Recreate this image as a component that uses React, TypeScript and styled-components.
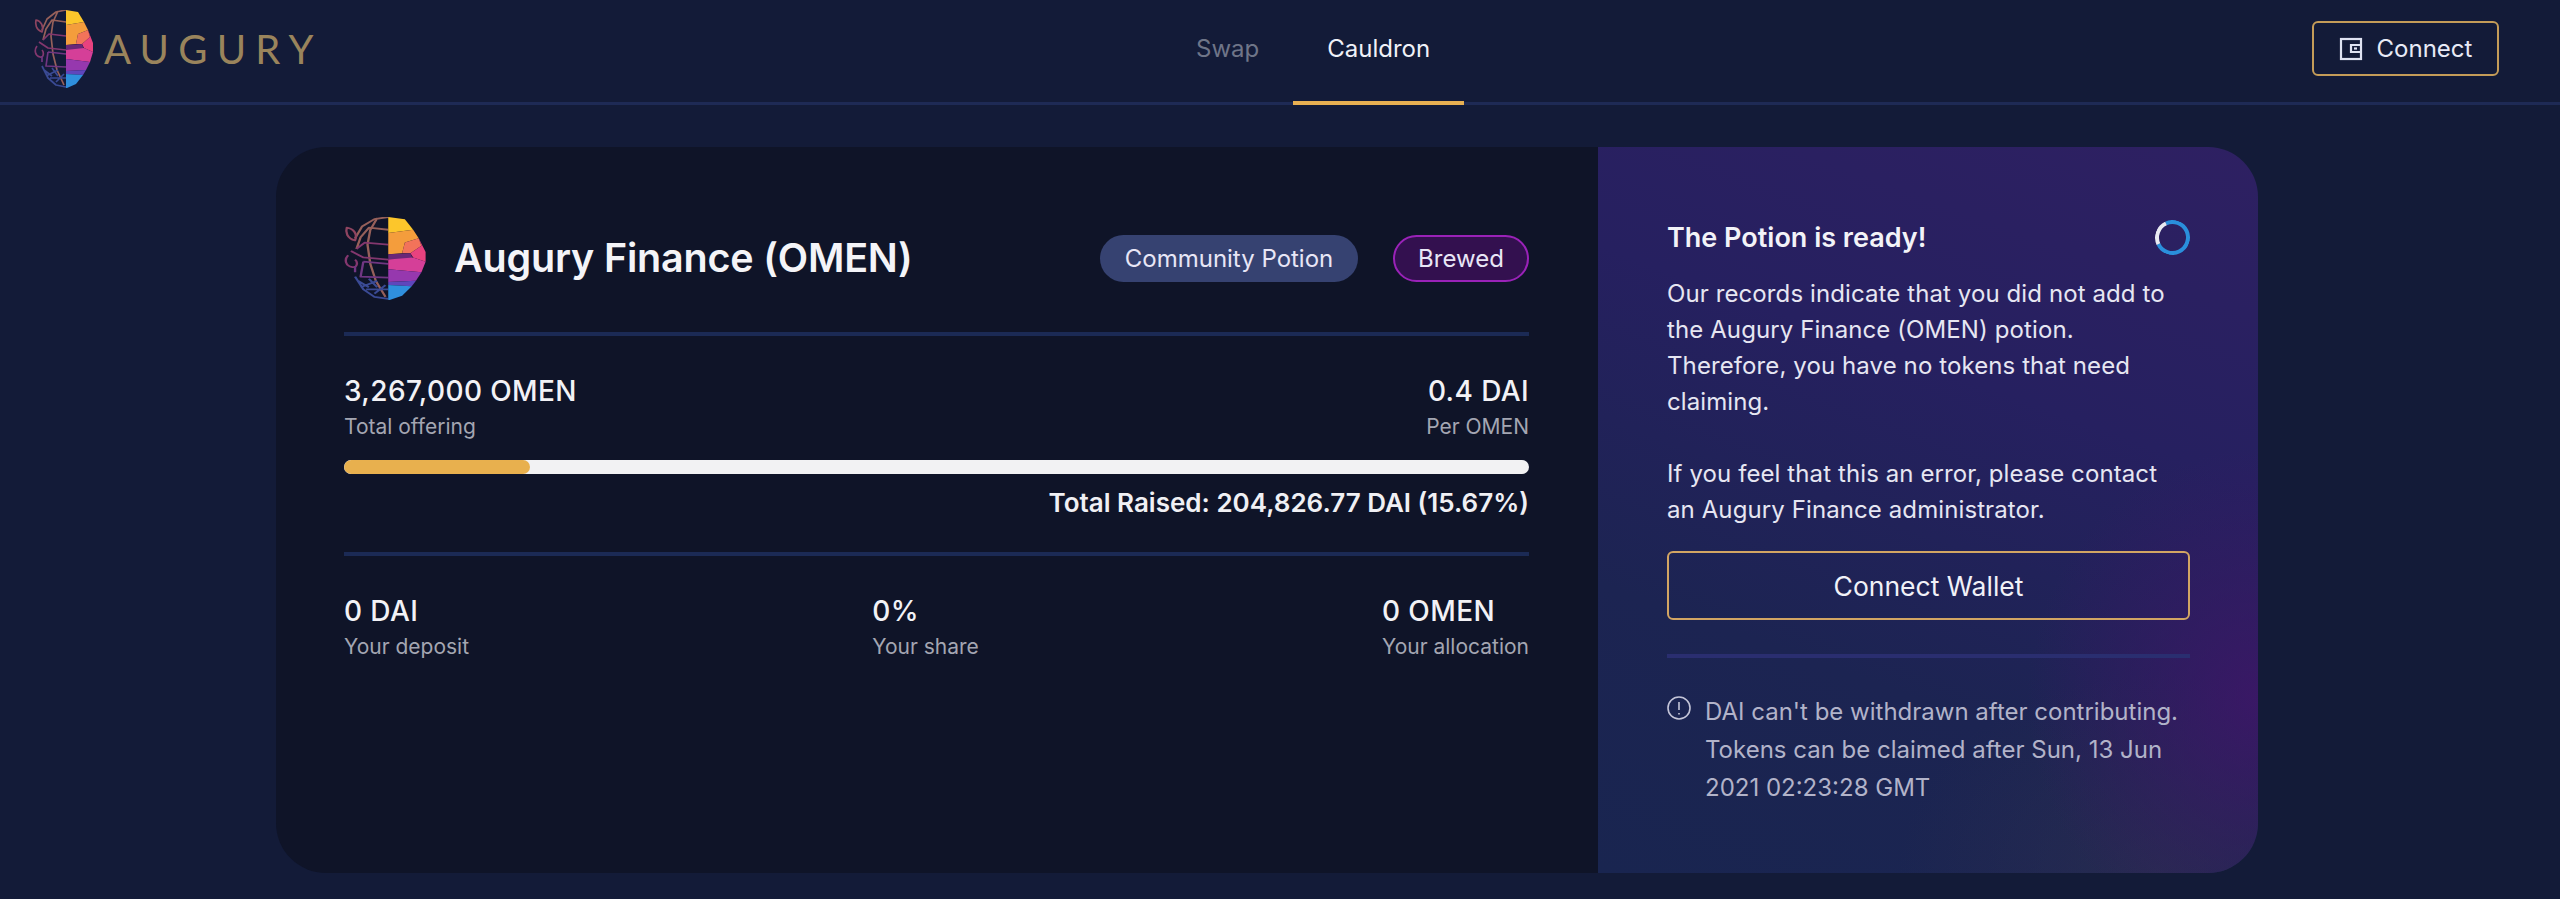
import React from "react";
import styled, { createGlobalStyle } from "styled-components";

const Global = createGlobalStyle`
  html, body { margin: 0; padding: 0; background: #131b38; }
  body { font-family: Inter, "Liberation Sans", sans-serif; color: #f2f2f7; -webkit-font-smoothing: antialiased; }
  * { box-sizing: border-box; }
`;

const Page = styled.div`
  width: 2560px;
  height: 899px;
  overflow: hidden;
  background: #131b38;
`;

const Header = styled.header`
  height: 105px;
  border-bottom: 3px solid #1e2a55;
  display: flex;
  justify-content: space-between;
  align-items: stretch;
  padding: 0 61px 0 34px;
`;

const Brand = styled.div`
  display: flex;
  align-items: flex-start;
  gap: 10px;
  padding-top: 10px;
  width: 1128px;
`;

const Wordmark = styled.span`
  font-family: Lato, sans-serif;
  font-weight: 400;
  font-size: 40px;
  line-height: 78px;
  letter-spacing: 9.2px;
  color: #9a845c;
`;

const Nav = styled.nav`
  display: flex;
  align-items: stretch;
  flex: 1;
`;

const NavItem = styled.a<{ $active?: boolean }>`
  display: flex;
  align-items: center;
  justify-content: center;
  font-size: 24px;
  padding: 0 34px 4px;
  height: 105px;
  color: ${(p) => (p.$active ? "#f0f1f8" : "#6f7588")};
  border-bottom: 4px solid ${(p) => (p.$active ? "#e8b052" : "transparent")};
`;

const Right = styled.div`
  display: flex;
  justify-content: flex-end;
  align-items: flex-start;
  padding-top: 21px;
`;

const ConnectButton = styled.button`
  width: 187px;
  height: 55px;
  display: flex;
  align-items: center;
  justify-content: center;
  gap: 14px;
  background: transparent;
  border: 2px solid #c49c58;
  border-radius: 6px;
  font: 400 24px Inter, sans-serif;
  color: #e8eaf6;
`;

const Main = styled.main`
  display: flex;
  justify-content: flex-start;
  padding: 42px 0 0 276px;
`;

const Card = styled.section`
  width: 1982px;
  height: 726px;
  border-radius: 50px;
  overflow: hidden;
  display: grid;
  grid-template-columns: 1322px 660px;
`;

const LeftPanel = styled.div`
  background: #0f1428;
  padding: 66px 69px 0 68px;
`;

const TitleRow = styled.div`
  display: flex;
  align-items: center;
  height: 90px;
`;

const Title = styled.h1`
  margin: 0 0 0 27px;
  font-size: 39.5px;
  font-weight: 600;
  letter-spacing: -0.2px;
  color: #f4f4f8;
  flex: 1;
`;

const Pill = styled.span<{ $kind: "blue" | "purple" }>`
  height: 47px;
  display: inline-flex;
  align-items: center;
  justify-content: center;
  border-radius: 24px;
  font-size: 24px;
  color: #e8e6f6;
  width: ${(p) => (p.$kind === "blue" ? "258px" : "136px")};
  margin-left: ${(p) => (p.$kind === "blue" ? "0" : "35px")};
  background: ${(p) => (p.$kind === "blue" ? "#364271" : "#33104f")};
  border: ${(p) => (p.$kind === "blue" ? "none" : "2px solid #9a22b8")};
`;

const Divider = styled.div<{ $top: number; $bottom: number }>`
  height: 4px;
  background: #1b2a55;
  margin-top: ${(p) => p.$top}px;
  margin-bottom: ${(p) => p.$bottom}px;
`;

const Spread = styled.div`
  display: flex;
  justify-content: space-between;
`;

const Stat = styled.div<{ $end?: boolean }>`
  display: flex;
  flex-direction: column;
  align-items: ${(p) => (p.$end ? "flex-end" : "flex-start")};
`;

const StatValue = styled.div`
  font-size: 28px;
  font-weight: 500;
  line-height: 34px;
  color: #f2f2f6;
  letter-spacing: 0.4px;
`;

const StatLabel = styled.div`
  font-size: 21px;
  line-height: 26px;
  margin-top: 6px;
  color: #a4a6b2;
`;

const Track = styled.div`
  height: 14px;
  border-radius: 7px;
  background: #f2f2f3;
  overflow: hidden;
  margin-top: 20px;
`;

const Fill = styled.div`
  height: 100%;
  border-radius: 7px;
  background: #e8b04e;
`;

const Raised = styled.div`
  text-align: right;
  font-size: 26px;
  font-weight: 600;
  line-height: 32px;
  margin-top: 13px;
  color: #f0f0f4;
`;

const RightPanel = styled.aside`
  padding: 72px 68px 0 69px;
  background:
    radial-gradient(230px 250px at 100% 76%, rgba(62, 22, 104, 0.85), rgba(62, 22, 104, 0) 100%),
    radial-gradient(260px 200px at 85% 100%, rgba(44, 46, 80, 0.7), rgba(44, 46, 80, 0) 100%),
    linear-gradient(200deg, #2e2062 0%, #262060 35%, #1c2452 70%, #192550 100%);
`;

const PotionHead = styled.div`
  display: flex;
  justify-content: space-between;
  align-items: center;
  height: 36px;
`;

const PotionTitle = styled.h2`
  margin: 0;
  font-size: 27px;
  font-weight: 600;
  color: #f3f3f8;
`;

const Spinner = styled.div`
  width: 35px;
  height: 35px;
  border-radius: 50%;
  border: 4px solid #2a8fdc;
  border-left-color: #e9eaf2;
  transform: rotate(20deg);
`;

const Body = styled.p`
  margin: 21px 0 0;
  font-size: 24px;
  line-height: 36px;
  color: #e6e6f2;
  letter-spacing: 0.1px;
`;

const WalletButton = styled.button`
  display: block;
  width: 100%;
  height: 69px;
  margin-top: 23px;
  background: transparent;
  border: 2px solid #d2a563;
  border-radius: 6px;
  font: 400 26.5px Inter, sans-serif;
  color: #f1f1f8;
`;

const PanelDivider = styled.div`
  height: 4px;
  background: #2a2e70;
  margin: 34px 0 35px;
`;

const Note = styled.div`
  display: flex;
  gap: 14px;
`;

const NoteText = styled.p`
  margin: 0;
  font-size: 24px;
  line-height: 38px;
  color: #b2b3c9;
`;

const NoteIcon = styled.svg`
  flex: none;
  margin-top: 3px;
`;

const FaceSvg = styled.svg`
  flex: none;
  filter: blur(0.5px);
`;

const Face = ({ w, h }: { w: number; h: number }) => (
  <FaceSvg width={w} height={h} viewBox="0 0 60 78" fill="none" preserveAspectRatio="none">
    <g strokeWidth="1.7" strokeLinejoin="round">
      <path d="M32 0 L22 2 L13 9 L8 20 M32 12 L18 10 L12 19 L9 30 M24 1 L19 12 L17 26 L19 44 L23 60 L30 75" stroke="#96605a" />
      <path d="M8 22 C2 20 1 14 2 10 C7 11 10 16 8 22 Z" stroke="#8e4460" />
      <path d="M32 26 L15 24 L9 30 M3 36 C0 40 1 46 6 47 C10 48 10 42 8 40 M5 32 L14 38 L32 40" stroke="#83376e" />
      <path d="M14 42 L32 44 M8 46 L8 52 M14 42 L12 56 L32 57" stroke="#703682" />
      <path d="M8 56 L14 68 L22 75 L32 77 M16 68 L32 68 M10 60 L18 66 M18 58 L24 66 M12 66 L24 60 M22 72 L30 64" stroke="#3a4a94" />
    </g>
    <polygon points="32,0 44,2 50,12 32,15" fill="#fcc62b" />
    <polygon points="32,15 50,12 54,20 44,24 42,34 32,35" fill="#f49d3c" />
    <polygon points="44,24 54,20 56,27 48,34 42,34" fill="#f2735a" />
    <polygon points="54,20 59,33 59,42 50,38 48,34 56,27" fill="#e8427f" />
    <polygon points="32,35 48,34 50,40 32,40" fill="#6a2778" />
    <polygon points="32,40 50,38 59,42 56,52 32,49" fill="#d53f98" />
    <polygon points="32,49 56,52 52,60 32,61" fill="#9638ae" />
    <polygon points="32,61 52,60 49,65 32,64" fill="#5f46bc" />
    <polygon points="32,64 49,65 42,74 33,78 32,78" fill="#2f8fdd" />
  </FaceSvg>
);

const Wallet = () => (
  <svg width="24" height="24" viewBox="0 0 24 24" fill="none" stroke="#dfe3f2" strokeWidth="2.2">
    <rect x="2" y="2" width="20" height="20" />
    <path d="M22 8 H12 V15 H22" />
    <path d="M15 11.5 H18" />
  </svg>
);

export default function App() {
  return (
    <Page>
      <Global />
      <Header>
        <Brand>
          <Face w={60} h={78} />
          <Wordmark>AUGURY</Wordmark>
        </Brand>
        <Nav>
          <NavItem>Swap</NavItem>
          <NavItem $active>Cauldron</NavItem>
        </Nav>
        <Right>
          <ConnectButton>
            <Wallet />
            Connect
          </ConnectButton>
        </Right>
      </Header>
      <Main>
        <Card>
          <LeftPanel>
            <TitleRow>
              <Face w={83} h={83} />
              <Title>Augury Finance (OMEN)</Title>
              <Pill $kind="blue">Community Potion</Pill>
              <Pill $kind="purple">Brewed</Pill>
            </TitleRow>
            <Divider $top={29} $bottom={38} />
            <Spread>
              <Stat>
                <StatValue>3,267,000 OMEN</StatValue>
                <StatLabel>Total offering</StatLabel>
              </Stat>
              <Stat $end>
                <StatValue>0.4 DAI</StatValue>
                <StatLabel>Per OMEN</StatLabel>
              </Stat>
            </Spread>
            <Track>
              <Fill style={{ width: "15.67%" }} />
            </Track>
            <Raised>Total Raised: 204,826.77 DAI (15.67%)</Raised>
            <Divider $top={33} $bottom={38} />
            <Spread>
              <Stat>
                <StatValue>0 DAI</StatValue>
                <StatLabel>Your deposit</StatLabel>
              </Stat>
              <Stat>
                <StatValue>0%</StatValue>
                <StatLabel>Your share</StatLabel>
              </Stat>
              <Stat>
                <StatValue>0 OMEN</StatValue>
                <StatLabel>Your allocation</StatLabel>
              </Stat>
            </Spread>
          </LeftPanel>
          <RightPanel>
            <PotionHead>
              <PotionTitle>The Potion is ready!</PotionTitle>
              <Spinner />
            </PotionHead>
            <Body>
              Our records indicate that you did not add to the Augury Finance (OMEN) potion. Therefore, you have no tokens that need claiming.
              <br />
              <br />
              If you feel that this an error, please contact an Augury Finance administrator.
            </Body>
            <WalletButton>Connect Wallet</WalletButton>
            <PanelDivider />
            <Note>
              <NoteIcon width="24" height="24" viewBox="0 0 24 24" fill="none" stroke="#c4c5d8" strokeWidth="1.6">
                <circle cx="12" cy="12" r="11" />
                <path d="M12 6 V14 M12 17 V18.4" />
              </NoteIcon>
              <NoteText>DAI can't be withdrawn after contributing. Tokens can be claimed after Sun, 13 Jun 2021 02:23:28 GMT</NoteText>
            </Note>
          </RightPanel>
        </Card>
      </Main>
    </Page>
  );
}
